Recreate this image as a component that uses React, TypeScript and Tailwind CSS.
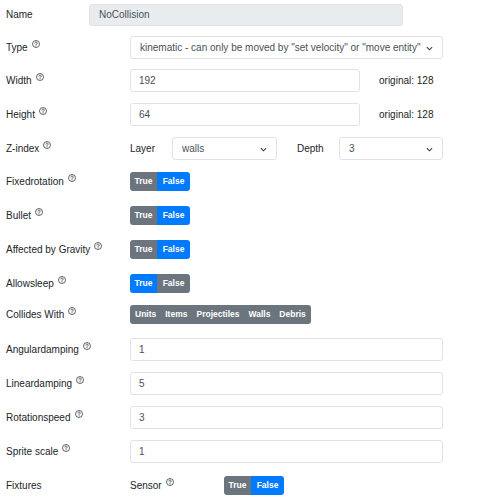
import type { ReactNode } from 'react'

const FONT = { fontFamily: '"Liberation Sans", Arial, sans-serif' }

function Help() {
  return (
    <svg
      width="8"
      height="8"
      viewBox="0 0 16 16"
      className="relative -top-[4px] ml-[4px] inline-block"
      fill="none"
      stroke="#212529"
      strokeWidth="1.4"
    >
      <circle cx="8" cy="8" r="7" />
      <path d="M5.8 6.2a2.2 2.2 0 1 1 3.3 1.9c-.7.4-1.1.8-1.1 1.6v.5" strokeLinecap="round" />
      <circle cx="8" cy="12" r="0.8" fill="#212529" stroke="none" />
    </svg>
  )
}

function Label({ text, help = true, w = 'w-[130px]' }: { text: string; help?: boolean; w?: string }) {
  return (
    <div className={`${w} shrink-0 pl-[6px] text-[10px] text-[#212529]`}>
      {text}
      {help && <Help />}
    </div>
  )
}

function Chevron() {
  return (
    <svg width="7" height="5" viewBox="0 0 8 5" className="absolute right-[9px] top-[9px]" fill="none" stroke="#343a40" strokeWidth="1.2">
      <path d="M1 1l3 3 3-3" />
    </svg>
  )
}

function Input({ value, w = 'w-[313px]' }: { value: string; w?: string }) {
  return (
    <div className={`${w} flex h-[23px] items-center rounded-[3px] border border-[#dfe3e7] bg-white pl-[8px] text-[10px] text-[#495057]`}>
      {value}
    </div>
  )
}

function Select({ value, w }: { value: string; w: string }) {
  return (
    <div className={`${w} relative flex h-[23px] items-center rounded-[3px] border border-[#dfe3e7] bg-white pl-[9px] text-[10px] text-[#495057]`}>
      {value}
      <Chevron />
    </div>
  )
}

function Toggle({ on }: { on: boolean }) {
  const base = 'flex h-full items-center justify-center'
  return (
    <div className="flex h-[19px] overflow-hidden rounded-[3px] text-[8.5px] font-bold text-white">
      <div className={`${base} ${on ? 'bg-[#007bff]' : 'bg-[#6c757d]'} w-[27px]`}>True</div>
      <div className={`${base} ${on ? 'bg-[#6c757d]' : 'bg-[#007bff]'} w-[33px]`}>False</div>
    </div>
  )
}

function Row({ mt, children }: { mt: string; children: ReactNode }) {
  return <div className={`flex h-[23px] items-center ${mt}`}>{children}</div>
}

export default function App() {
  return (
    <div className="h-[500px] w-[493px] overflow-hidden bg-white pt-[3px]" style={FONT}>
      <Row mt="mt-0">
        <Label text="Name" help={false} w="w-[89px]" />
        <div className="flex h-[22px] w-[314px] items-center rounded-[3px] border border-[#dfe3e7] bg-[#e9ecef] pl-[9px] text-[10px] text-[#495057]">
          NoCollision
        </div>
      </Row>
      <Row mt="mt-[10px]">
        <Label text="Type" />
        <Select w="w-[313px]" value={'kinematic - can only be moved by "set velocity" or "move entity"'} />
      </Row>
      <Row mt="mt-[10px]">
        <Label text="Width" />
        <Input w="w-[230px]" value="192" />
        <span className="ml-[19px] text-[10px] text-[#212529]">original: 128</span>
      </Row>
      <Row mt="mt-[11px]">
        <Label text="Height" />
        <Input w="w-[230px]" value="64" />
        <span className="ml-[19px] text-[10px] text-[#212529]">original: 128</span>
      </Row>
      <Row mt="mt-[11px]">
        <Label text="Z-index" />
        <span className="w-[42px] text-[10px] text-[#212529]">Layer</span>
        <Select w="w-[105px]" value="walls" />
        <span className="ml-[20px] w-[42px] text-[10px] text-[#212529]">Depth</span>
        <Select w="w-[104px]" value="3" />
      </Row>
      <Row mt="mt-[10px]">
        <Label text="Fixedrotation" />
        <Toggle on={false} />
      </Row>
      <Row mt="mt-[11px]">
        <Label text="Bullet" />
        <Toggle on={false} />
      </Row>
      <Row mt="mt-[11px]">
        <Label text="Affected by Gravity" />
        <Toggle on={false} />
      </Row>
      <Row mt="mt-[11px]">
        <Label text="Allowsleep" />
        <Toggle on={true} />
      </Row>
      <Row mt="mt-[8px]">
        <Label text="Collides With" />
        <div className="flex h-[19px] items-center gap-[9px] rounded-[3px] bg-[#6c757d] px-[5px] text-[8.5px] font-bold text-white">
          <span>Units</span>
          <span>Items</span>
          <span>Projectiles</span>
          <span>Walls</span>
          <span>Debris</span>
        </div>
      </Row>
      <Row mt="mt-[12px]">
        <Label text="Angulardamping" />
        <Input value="1" />
      </Row>
      <Row mt="mt-[11px]">
        <Label text="Lineardamping" />
        <Input value="5" />
      </Row>
      <Row mt="mt-[11px]">
        <Label text="Rotationspeed" />
        <Input value="3" />
      </Row>
      <Row mt="mt-[11px]">
        <Label text="Sprite scale" />
        <Input value="1" />
      </Row>
      <Row mt="mt-[11px]">
        <Label text="Fixtures" help={false} />
        <div className="w-[94px] text-[10px] text-[#212529]">
          Sensor
          <Help />
        </div>
        <Toggle on={false} />
      </Row>
    </div>
  )
}
